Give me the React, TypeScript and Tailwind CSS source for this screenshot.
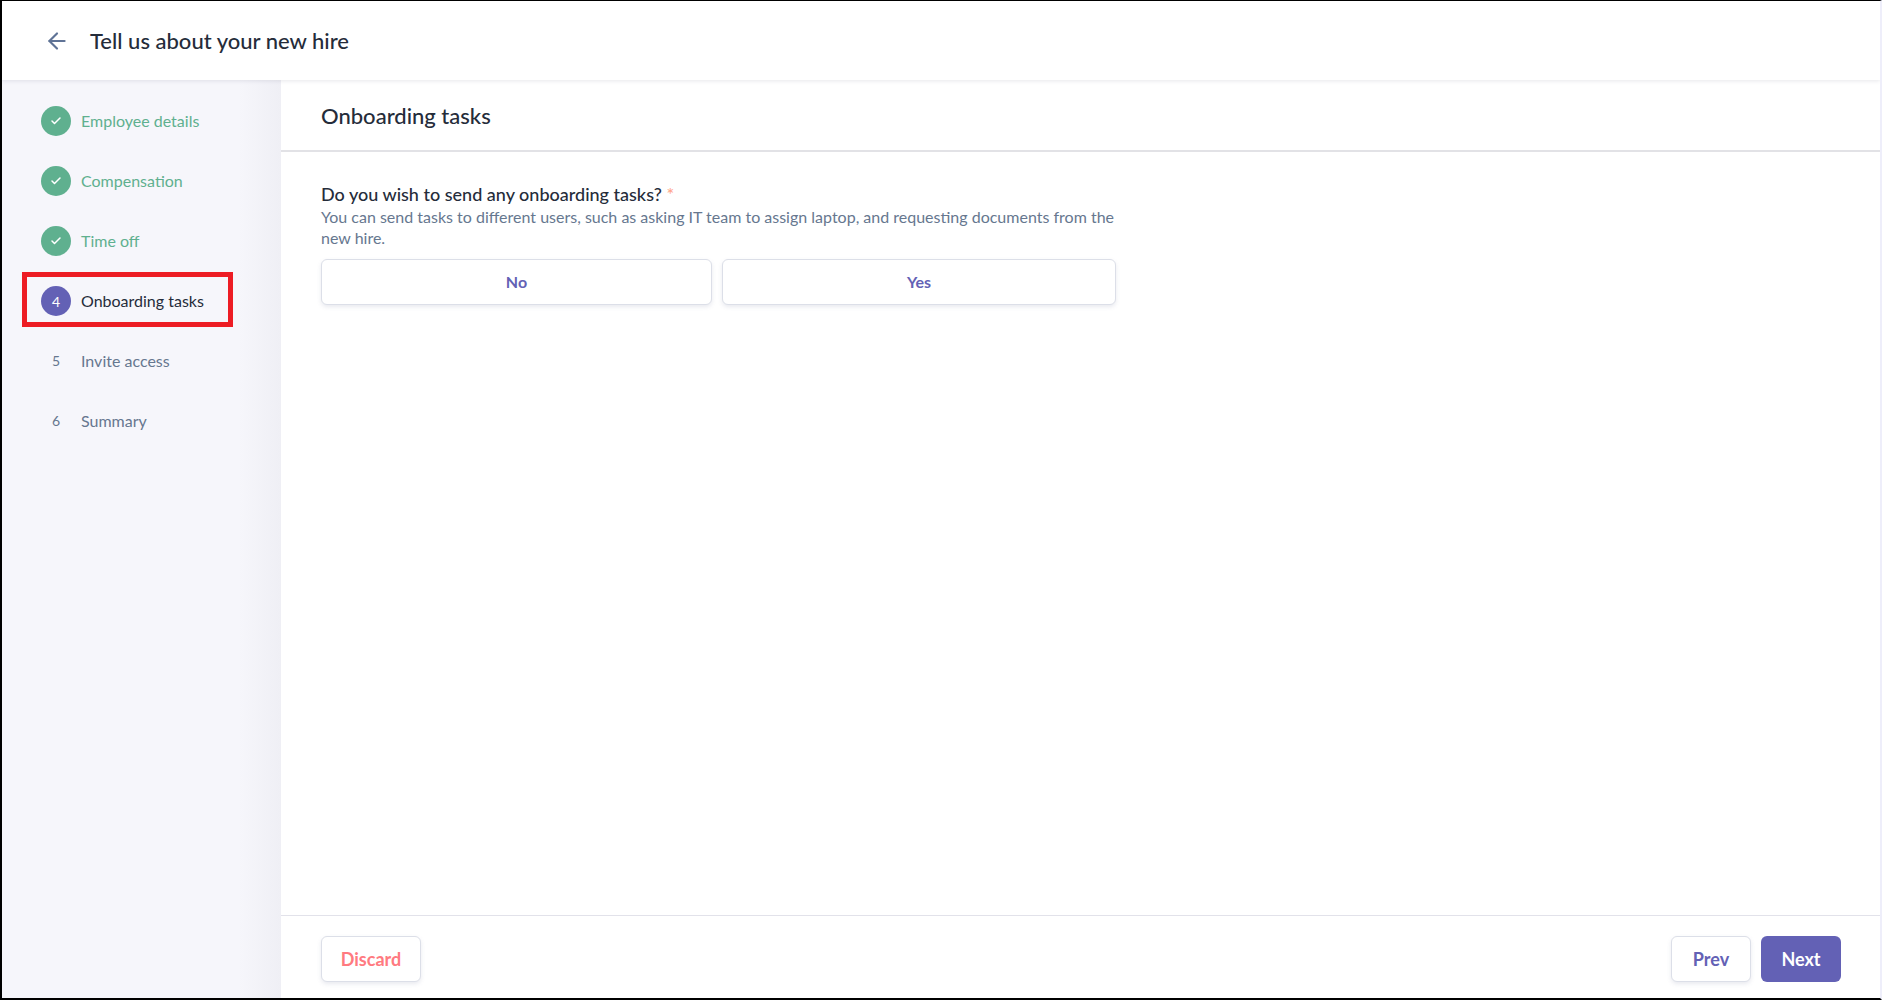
import { ArrowLeft, Check } from "lucide-react";

type Step = {
  label: string;
  state: "done" | "active" | "todo";
};

const steps: Step[] = [
  { label: "Employee details", state: "done" },
  { label: "Compensation", state: "done" },
  { label: "Time off", state: "done" },
  { label: "Onboarding tasks", state: "active" },
  { label: "Invite access", state: "todo" },
  { label: "Summary", state: "todo" },
];

function StepRow({ step, index }: { step: Step; index: number }) {
  return (
    <div className="relative flex h-[60px] items-center gap-[10px] pl-[39px]">
      {step.state === "done" && (
        <span className="flex h-[30px] w-[30px] items-center justify-center rounded-full bg-[#5fb08f] text-white">
          <Check size={12} strokeWidth={3} />
        </span>
      )}
      {step.state === "active" && (
        <span className="flex h-[30px] w-[30px] items-center justify-center rounded-full bg-[#6361b5] text-[14px] text-white">
          {index + 1}
        </span>
      )}
      {step.state === "todo" && (
        <span className="flex h-[30px] w-[30px] items-center justify-center pb-[2px] text-[14px] text-[#66778f]">
          {index + 1}
        </span>
      )}
      <span
        className={
          step.state === "done"
            ? "text-[16px] text-[#5fb08f]"
            : step.state === "active"
              ? "text-[16px] text-[#252c3a]"
              : "text-[16px] text-[#66778f]"
        }
      >
        {step.label}
      </span>
      {step.state === "active" && (
        <div className="absolute left-[20px] top-[1px] h-[55px] w-[211px] border-[5px] border-[#ed1c24]" />
      )}
    </div>
  );
}

export default function App() {
  const outline =
    "rounded-[6px] border border-[#dcdfe8] bg-white shadow-[0_2px_4px_rgba(100,110,150,0.15)]";

  return (
    <div className="flex h-[1000px] w-[1882px] flex-col overflow-hidden border-t border-b-2 border-l-2 border-r-2 border-t-black border-b-black border-l-black border-r-[#eeeefa] bg-white font-['Lato',sans-serif]">
      <header className="z-10 flex h-[79px] shrink-0 items-center bg-white pl-[42px] shadow-[0_1px_4px_rgba(60,60,90,0.12)]">
        <ArrowLeft size={26} strokeWidth={2} className="text-[#5f7396]" />
        <h1 className="ml-[20px] text-[22px] font-medium text-[#252c3a]">Tell us about your new hire</h1>
      </header>

      <div className="flex min-h-0 flex-1">
        <aside className="w-[279px] shrink-0 bg-[linear-gradient(90deg,#f6f6fb_0%,#f6f6fb_85%,#efeff5_100%)] pt-[11px]">
          {steps.map((step, index) => (
            <StepRow key={step.label} step={step} index={index} />
          ))}
        </aside>

        <main className="flex min-w-0 flex-1 flex-col">
          <div className="flex h-[72px] shrink-0 items-center border-b-2 border-[#e2e2e6] pl-[40px]">
            <h2 className="text-[22px] font-medium text-[#252c3a]">Onboarding tasks</h2>
          </div>

          <div className="flex-1 pl-[40px] pt-[30px]">
            <div className="w-[795px]">
              <p className="text-[18px] font-medium leading-[24px] text-[#252c3a]">
                Do you wish to send any onboarding tasks? <span className="text-[#ffa58a]">*</span>
              </p>
              <p className="text-[16px] leading-[21px] text-[#66778f]">
                You can send tasks to different users, such as asking IT team to assign laptop, and requesting documents
                from the new hire.
              </p>
              <div className="mt-[11px] flex gap-[10px]">
                <button type="button" className={`h-[46px] w-[391px] text-[16px] font-bold text-[#6361b5] ${outline}`}>
                  No
                </button>
                <button type="button" className={`h-[46px] w-[394px] text-[16px] font-bold text-[#6361b5] ${outline}`}>
                  Yes
                </button>
              </div>
            </div>
          </div>

          <footer className="flex h-[83px] shrink-0 items-start justify-between border-t border-[#e2e2ea] pl-[40px] pr-[39px] pt-[20px]">
            <button type="button" className={`h-[46px] w-[100px] text-[18px] font-bold text-[#ff7a80] ${outline}`}>
              Discard
            </button>
            <div className="flex gap-[10px]">
              <button type="button" className={`h-[46px] w-[80px] text-[18px] font-bold text-[#6361b5] ${outline}`}>
                Prev
              </button>
              <button
                type="button"
                className="h-[46px] w-[80px] rounded-[6px] bg-[#6361b5] text-[18px] font-bold text-white"
              >
                Next
              </button>
            </div>
          </footer>
        </main>
      </div>
    </div>
  );
}
